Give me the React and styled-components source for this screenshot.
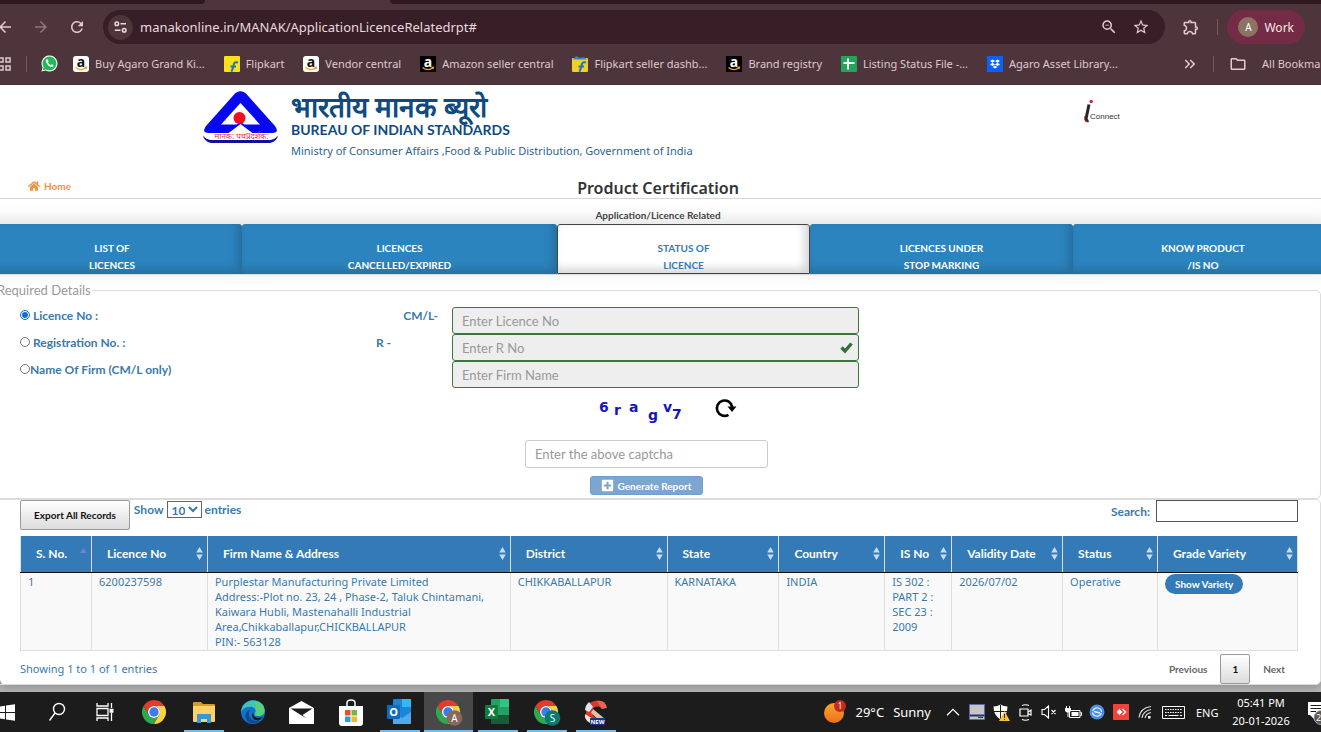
import React, { useState } from "react"
import styled, { createGlobalStyle } from "styled-components"
import {
  MdArrowBack,
  MdArrowForward,
  MdKeyboardDoubleArrowRight,
  MdOutlineExtension,
  MdOutlineFolder,
  MdRefresh,
  MdStarBorder,
  MdZoomOut,
} from "react-icons/md"
import { FaHome, FaPlusSquare } from "react-icons/fa"

const GlobalStyle = createGlobalStyle`
  * {
    box-sizing: border-box;
  }
  body {
    margin: 0;
    font-family: "Noto Sans", "Open Sans", sans-serif;
    font-size: 11px;
    overflow-x: hidden;
  }
  button, input, select {
    font-family: inherit;
  }
  svg {
    overflow: visible;
  }
`

const Shell = styled.div`
  min-height: 100vh;
  display: flex;
  flex-direction: column;
  overflow: hidden;
  background: #bdbdbd;
`

/* ---------- browser ---------- */

const Browser = styled.header`
  position: relative;
  background: #4e353c;
  color: #e6d0d6;
  height: 85px;
`

const TabStrip = styled.div`
  display: flex;
  justify-content: space-between;
  height: 4px;
`

const InactiveTabs = styled.div`
  width: ${props => props.width};
  background: #2f1820;
  border-radius: ${props => (props.right ? "0 0 0 6px" : "0 0 6px 0")};
`

const Toolbar = styled.div`
  display: flex;
  align-items: center;
  height: 46px;
  padding-right: 16px;
`

const NavButton = styled.button`
  display: flex;
  align-items: center;
  justify-content: center;
  width: ${props => props.width || 36}px;
  height: 28px;
  margin-left: ${props => (props.bleed ? -14 : 0)}px;
  padding: 0;
  border: 0;
  background: none;
  color: ${props => (props.faded ? "#8f757d" : "#e6c9d1")};
  font-size: 18px;
  flex: none;
`

const Omnibox = styled.div`
  flex: 1;
  display: flex;
  align-items: center;
  height: 34px;
  margin-left: 8px;
  padding: 0 8px 0 5px;
  border-radius: 17px;
  background: #371e27;
`

const SiteInfo = styled.button`
  display: flex;
  align-items: center;
  justify-content: center;
  width: 25px;
  height: 25px;
  padding: 0;
  border: 0;
  border-radius: 50%;
  background: #4e353c;
`

const Address = styled.input`
  flex: 1;
  min-width: 0;
  margin-left: 7px;
  padding: 0;
  border: 0;
  outline: 0;
  background: none;
  color: #ead9dd;
  font-size: 13px;
`

const Divider = styled.span`
  width: 1px;
  height: 16px;
  flex: none;
  background: #755962;
`

const Profile = styled.button`
  display: flex;
  align-items: center;
  gap: 6px;
  height: 34px;
  margin-left: 9px;
  padding: 0 11px;
  border: 0;
  border-radius: 17px;
  background: #742b46;
  color: #fbe4eb;
  font-size: 12px;
`

const Avatar = styled.span`
  width: 20px;
  height: 20px;
  border-radius: 50%;
  background: #8c7463;
  color: #fff;
  font-size: 10px;
  line-height: 20px;
  text-align: center;
`

const Bookmarks = styled.nav`
  display: flex;
  align-items: center;
  height: 27px;
  white-space: nowrap;
`

const BookmarkLinks = styled.div`
  flex: 1;
  display: flex;
  align-items: center;
  gap: 19px;
  margin-left: 14px;
`

const Bookmark = styled.a`
  display: flex;
  align-items: center;
  gap: 6px;
  margin-right: ${props => (props.tight ? -4 : 0)}px;
  color: #dfc9cf;
  font-size: 11px;
  text-decoration: none;
  svg {
    flex: none;
  }
`

/* ---------- page ---------- */

const Page = styled.main`
  background: #fff;
  border-radius: 0 0 6px 6px;
  box-shadow: 0 0 12px 4px #8f8f8f;
`

const Banner = styled.div`
  display: flex;
  justify-content: space-between;
  align-items: flex-start;
  height: 93px;
  padding: 6px 201px 0 203px;
`

const Brand = styled.div`
  display: flex;
  gap: 13px;
`

const BrandHindi = styled.div`
  color: #0f4a80;
  font-family: Lato, sans-serif;
  font-size: 28px;
  font-weight: 700;
  line-height: 30px;
`

const BrandName = styled.div`
  color: #0f4a80;
  font-family: Lato, sans-serif;
  font-size: 14px;
  font-weight: 700;
  line-height: 18px;
`

const Ministry = styled.div`
  margin-top: 4px;
  color: #2a6496;
  line-height: 16px;
`

const Partner = styled.div`
  margin-top: 8px;
`

const TitleRow = styled.div`
  display: grid;
  grid-template-columns: 1fr auto 1fr;
  align-items: center;
  height: 21px;
  padding: 0 5px 0 0;
  border-bottom: 1px solid #d5d5d5;
`

const HomeLink = styled.a`
  display: flex;
  align-items: center;
  gap: 4px;
  padding: 0 0 4px 28px;
  color: #f0923a;
  font-family: Lato, sans-serif;
  font-size: 10px;
  font-weight: 700;
  text-decoration: none;
  svg {
    font-size: 12px;
  }
`

const Title = styled.h1`
  margin: 0;
  color: #333;
  font-size: 16px;
  font-weight: 600;
  line-height: 20px;
`

const Subtitle = styled.h2`
  height: 25px;
  margin: 0;
  padding: 8px 5px 0 0;
  color: #444;
  font-family: Lato, sans-serif;
  font-size: 10px;
  font-weight: 700;
  line-height: 16px;
  text-align: center;
`

const Tabs = styled.div`
  display: grid;
  grid-template-columns: 260fr 315fr 253fr 263fr 260fr;
  margin: 0 -12px 6px -18px;
  border-bottom: 1px solid #d5dde3;
  box-shadow: 0 -4px 16px rgba(0, 0, 0, 0.12);
`

const Tab = styled.button`
  height: 50px;
  padding: ${props => (props.active ? 15 : 16)}px 0 0;
  border: ${props => (props.active ? "1px solid #444" : "0")};
  border-radius: 3px 3px 0 0;
  background: ${props => (props.active ? "#fff" : "#2c84be")};
  box-shadow: inset -4px -4px 10px rgba(0, 0, 0, 0.18);
  color: ${props => (props.active ? "#337ab7" : "#fff")};
  font-family: Lato, sans-serif;
  font-size: 10px;
  font-weight: 700;
  line-height: 17px;
  white-space: pre-line;
`

const Panel = styled.fieldset`
  min-width: 0;
  margin: 0 0 0 -5px;
  padding: 0 0 0 4px;
  border: 1px solid #dcdcdc;
  border-radius: 5px;
`

const Legend = styled.legend`
  margin: 0 0 8px -4px;
  padding: 0 1px;
  color: #999;
  font-family: Lato, sans-serif;
  font-size: 13px;
  line-height: 18px;
`

const FormRow = styled.div`
  display: grid;
  grid-template-columns: 452fr 407fr 461fr;
`

const FormLabels = styled.div`
  display: flex;
  justify-content: space-between;
  align-items: flex-start;
  padding-left: 20px;
  color: #3a79ad;
  font-family: Lato, sans-serif;
  font-size: 12px;
  font-weight: 700;
  line-height: 18px;
`

const Radio = styled.input`
  width: 10px;
  height: 10px;
  margin: 3px ${props => (props.tight ? 0 : 3)}px 0 0;
  accent-color: #0b6fd6;
`

const RadioLabel = styled.label`
  flex: 1;
`

const Prefix = styled.label`
  padding-right: ${props => props.space}px;
`

const FieldBox = styled.div`
  position: relative;
`

const TextField = styled.input`
  width: 100%;
  height: 27px;
  padding: 0 9px;
  border: 1px solid #3c763d;
  border-radius: 3px;
  background: #eee;
  font-family: Lato, sans-serif;
  font-size: 13px;
  &::placeholder {
    color: #999;
  }
`

const ValidMark = styled.svg`
  position: absolute;
  top: 8px;
  right: 6px;
`

const Captcha = styled.div`
  display: flex;
  flex-direction: column;
  align-items: center;
  padding: 8px 27px 3px 0;
`

const CaptchaImage = styled.div`
  display: flex;
  align-items: flex-start;
  gap: 29px;
  height: 44px;
  padding-left: 42px;
`

const RefreshButton = styled.button`
  padding: 2px 0 0;
  border: 0;
  background: none;
`

const CaptchaField = styled(TextField)`
  width: 243px;
  height: 28px;
  border-color: #ccc;
  background: #fff;
`

const GenerateButton = styled.button`
  display: flex;
  align-items: center;
  gap: 4px;
  height: 19px;
  margin-top: 8px;
  padding: 0 11px 0 10px;
  border: 1px solid #6f9fcc;
  border-radius: 3px;
  background: #7ca6cf;
  color: #fff;
  font-family: Lato, sans-serif;
  font-size: 10px;
  font-weight: 700;
  svg {
    font-size: 13px;
  }
`

/* ---------- records ---------- */

const Records = styled.div`
  padding: 0 22px 0 20px;
  color: #3a79ad;
`

const RecordTools = styled.div`
  display: flex;
  align-items: flex-start;
  height: 36px;
  font-family: Lato, sans-serif;
  font-size: 12px;
  font-weight: 700;
`

const GreyButton = styled.button`
  height: 30px;
  padding: 0 ${props => props.pad}px;
  border: 1px solid #999;
  border-radius: 2px;
  background: linear-gradient(#fff, #dcdcdc);
  color: #111;
  font-family: Lato, sans-serif;
  font-size: 10px;
  font-weight: 700;
`

const Length = styled.label`
  display: flex;
  align-items: center;
  gap: 3px;
  height: 19px;
  margin-left: 4px;
`

const LengthSelect = styled.select`
  width: 35px;
  height: 17px;
  padding: 0;
  border: 1px solid #666;
  background: #fff;
  color: inherit;
  font-size: 12px;
  font-weight: 700;
`

const Search = styled.label`
  display: flex;
  align-items: center;
  gap: 6px;
  margin-left: auto;
`

const SearchField = styled.input`
  width: 142px;
  height: 22px;
  border: 1px solid #555;
  background: #fff;
`

const Table = styled.table`
  width: 100%;
  border-collapse: collapse;
  table-layout: fixed;
`

const Head = styled.th`
  width: ${props => props.width}%;
  height: 36px;
  padding: 0 3px 0 15px;
  border: 1px solid #ddd;
  border-width: 0 1px;
  border-bottom: 1px solid #111;
  background: #337ab7;
  color: #fff;
  font-family: Lato, sans-serif;
  font-size: 12px;
  font-weight: 700;
  text-align: left;
`

const HeadInner = styled.div`
  display: flex;
  justify-content: space-between;
  align-items: center;
  white-space: nowrap;
`

const Data = styled.td`
  height: 78px;
  padding: 1px 7px;
  border: 1px solid #ddd;
  background: #f9f9f9;
  line-height: 15px;
  vertical-align: top;
  white-space: pre-line;
`

const VarietyButton = styled.button`
  height: 20px;
  padding: 0 10px;
  border: 0;
  border-radius: 10px;
  background: #337ab7;
  color: #fff;
  font-family: Lato, sans-serif;
  font-size: 10px;
  font-weight: 700;
`

const RecordFooter = styled.div`
  display: flex;
  justify-content: space-between;
  align-items: center;
  padding-top: 3px;
`

const PageLink = styled.button`
  padding: 0 13px;
  border: 0;
  background: none;
  color: #666;
  font-family: Lato, sans-serif;
  font-size: 10px;
  font-weight: 700;
`

/* ---------- taskbar ---------- */

const Taskbar = styled.footer`
  display: flex;
  align-items: stretch;
  height: 40px;
  margin-top: auto;
  background: #1c1c1c;
  color: #fff;
  position: relative;
`

const TaskButton = styled.button`
  display: flex;
  align-items: center;
  justify-content: ${props => (props.start ? "flex-start" : "center")};
  width: ${props => (props.start ? 32 : 49)}px;
  padding: 0;
  border: 0;
  background: ${props =>
    props.open
      ? `linear-gradient(#76b9ed, #76b9ed) center bottom / ${props.active ? 49 : 40}px 2px no-repeat, `
      : ""}${props => (props.active ? "#484848" : "transparent")};
`

const Tray = styled.div`
  display: flex;
  align-items: center;
  margin-left: auto;
`

const Weather = styled.div`
  display: flex;
  align-items: center;
  gap: 9px;
  padding-right: 10px;
  font-size: 13px;
`

const TrayIcon = styled.span`
  display: flex;
  justify-content: center;
  width: ${props => props.width || 24}px;
`

const Language = styled.span`
  width: 37px;
  padding-left: 7px;
`

const Clock = styled.div`
  width: 70px;
  line-height: 18px;
  text-align: center;
`

const Notices = styled.span`
  display: flex;
  width: 25px;
  padding-left: 12px;
`

const AmazonIcon = ({ dark }) => (
  <svg width="16" height="16" viewBox="0 0 16 16">
    <rect width="16" height="16" rx={dark ? 0 : 3} fill={dark ? "#000" : "#fff"} />
    <text x="8" y="10.5" textAnchor="middle" fontFamily="Noto Sans" fontSize="14" fontWeight="700" fill={dark ? "#fff" : "#111"}>a</text>
    <path d="M2.5 11.5c3.4 2.7 7.4 2.7 10.6.3M11.3 11.3l2.200-.1-.5 2" fill="none" stroke="#f5a02c" strokeWidth="1.2" />
  </svg>
)

const FlipkartIcon = ({ bag }) => (
  <svg width="16" height="16" viewBox="0 0 16 16">
    <rect y={bag ? 2 : 0} width="16" height={bag ? 14 : 16} rx="1" fill={bag ? "#f3cf2b" : "#f9e21c"} />
    {bag && <path d="M1 3.5 4 0l4 2 4-1 3 2.5z" fill="#2d87c8" />}
    <path d="M14 6.500c-3-1-4 .5-4.400 2.700-.5 2.800-1 4.500-2.200 6.600M6.500 10.500h5.500" fill="none" stroke="#2277b8" strokeWidth="2" />
  </svg>
)

const SheetIcon = () => (
  <svg width="16" height="16" viewBox="0 0 16 16">
    <rect width="16" height="16" rx="1" fill="#23a45a" />
    <path d="M2.500 7h11M7 2.500v11" stroke="#fff" strokeWidth="2" />
  </svg>
)

const WhatsappIcon = () => (
  <svg width="17" height="17" viewBox="0 0 17 17">
    <path d="M.5 16.500 1.600 12.500A8 8 0 1 1 4.700 15.500z" fill="#fff" />
    <path d="M1.800 15.200l.9-3A6.900 6.900 0 1 1 5 14.400z" fill="#20b858" />
    <path d="M5.500 4.500c-1 1-.8 2.600.8 4.700 1.700 2.100 3.700 3.300 5.300 2.500.9-.5 1-1.300.8-1.600l-1.700-.9-.9 1c-1.300-.5-2.300-1.500-2.900-2.700l.7-.9-.8-1.900c-.3-.5-.9-.6-1.300-.2z" fill="#fff" />
  </svg>
)

const DropboxIcon = () => (
  <svg width="16" height="16" viewBox="0 0 16 16">
    <rect width="16" height="16" fill="#0d5fff" />
    <path d="m5.500 3.500 2.500 1.600-2.500 1.600L3 5.100zm5 0L13 5.100l-2.500 1.600L8 5.100zm-5 3.300L8 8.400 5.500 10 3 8.400zm5 0L13 8.400 10.500 10 8 8.400zM8 9.500l2.400 1.500L8 12.500 5.600 11z" fill="#fff" />
  </svg>
)

const AppsIcon = () => (
  <svg width="10" height="14" viewBox="0 0 10 14" fill="none" stroke="#dfc9cf" strokeWidth="1.500">
    <path d="M-2 1h4v4h-4zM5 1h4v4H5zM-2 9h4v4h-4zM5 9h4v4H5z" />
  </svg>
)

const TuneIcon = () => (
  <svg width="13" height="12" viewBox="0 0 13 12" fill="none" stroke="#ead9dd" strokeWidth="1.500">
    <circle cx="2.800" cy="2.800" r="1.800" />
    <path d="M6.500 2.800H12M.8 9.200h5.700" />
    <circle cx="10.200" cy="9.200" r="1.800" />
  </svg>
)

const BisLogo = () => (
  <svg width="75" height="52" viewBox="0 0 75 52">
    <path d="M32 2.500q5.500-4.500 11 0L72 35q5 7-3 7H49L37.500 34 26 42H6q-8 0-3-7z" fill="#0808f0" />
    <path d="M37.500 12 57 33.500H41.500L37.500 31l-4 2.500H18z" fill="#fff" />
    <path d="M37.500 33 50 42.500H25z" fill="#fff" />
    <circle cx="36.500" cy="27" r="6" fill="#f50d1c" />
    <path d="M0 44.500q3 4 8 4.500h59q5-.5 8-4.500-1 6-8 7.500H8q-7-1.500-8-7.500z" fill="#10109c" />
    <text x="38.500" y="48" textAnchor="middle" fontFamily="Noto Sans" fontSize="8" fill="#e5334a">मानक: पथप्रदर्शक:</text>
  </svg>
)

const ConnectLogo = () => (
  <svg width="37" height="26" viewBox="0 0 37 26">
    <path d="M6 5.500 3.200 19q-.6 3.500 2.300 2.500" fill="none" stroke="#2b2525" strokeWidth="3" />
    <path d="M1.800 17q-1.200 6 2.800 5.500" fill="none" stroke="#c03a3a" strokeWidth="1" />
    <circle cx="8.200" cy="2.500" r="1.700" fill="#b5323a" />
    <text x="7" y="20" fontFamily="Liberation Sans" fontSize="8" fill="#333">Connect</text>
  </svg>
)

const ReloadIcon = () => (
  <svg width="22" height="20" viewBox="0 0 22 20">
    <path d="M13.500 16.800A7.700 7.700 0 1 1 17.200 9" fill="none" stroke="#000" strokeWidth="2.600" />
    <path d="M12.500 8.500H21.500L17 14z" fill="#000" />
  </svg>
)

const CaptchaText = () => (
  <svg width="88" height="30" viewBox="0 0 88 30" fontFamily="DejaVu Sans" fontSize="14" fontWeight="700" fill="#1414c0">
    <text x="1" y="16">6</text>
    <text x="16" y="19">r</text>
    <text x="31" y="16">a</text>
    <text x="50" y="24">g</text>
    <text x="65" y="16">v</text>
    <text x="74" y="23">7</text>
  </svg>
)

const SortIcon = ({ sorted }) => (
  <svg width="9" height="13" viewBox="0 0 9 13">
    {sorted ? (
      <path d="M4.500 1 8 6H1z" fill="#6e7fdc" />
    ) : (
      <path d="M4.500 0 7.800 5.500H1.200zM4.500 13 1.200 7.500h6.600z" fill="#c8dcef" />
    )}
  </svg>
)

const WindowsIcon = () => (
  <svg width="16" height="17" viewBox="0 0 16 17">
    <path d="M0 2.400 5 1.700V8H0zM6 1.500 15 .2V8H6zM0 9h5v6.300L0 14.600zM6 9h9v7.800l-9-1.300z" fill="#fff" />
  </svg>
)

const SearchIcon = () => (
  <svg width="18" height="20" viewBox="0 0 18 20" fill="none" stroke="#fff" strokeWidth="1.400">
    <circle cx="11" cy="7" r="5.500" />
    <path d="M7 11 1.500 18.500" />
  </svg>
)

const TaskViewIcon = () => (
  <svg width="18" height="18" viewBox="0 0 18 18" fill="none" stroke="#fff" strokeWidth="1.300">
    <path d="M0 0v3h11V0M0 18v-3h11v3M0 5.500h11v7H0zM14.500 0v5M14.500 10v8" />
    <path d="M13.200 6.500h2.600v2.600h-2.600z" fill="#fff" />
  </svg>
)

const ChromeIcon = ({ badge, badgeColor }) => (
  <svg width="26" height="28" viewBox="0 0 26 28">
    <path d="M1.600 8A12 12 0 0 1 22.400 8H12a6 6 0 0 0-5.200 9z" fill="#e33b2e" />
    <path d="M1.600 8 6.800 17a6 6 0 0 0 10.400 0L12 26A12 12 0 0 1 1.600 8z" fill="#2da94f" />
    <path d="M22.400 8A12 12 0 0 1 12 26l5.200-9A6 6 0 0 0 12 8z" fill="#fdd23e" />
    <circle cx="12" cy="14" r="6" fill="#fff" />
    <circle cx="12" cy="14" r="4.700" fill="#3a7cec" />
    {badge && <circle cx="18.500" cy="20" r="7.800" fill={badgeColor} />}
    {badge && (
      <text x="18.500" y="23.500" textAnchor="middle" fontFamily="Noto Sans" fontSize="10" fill="#fff">{badge}</text>
    )}
  </svg>
)

const ExplorerIcon = () => (
  <svg width="22" height="22" viewBox="0 0 22 22">
    <path d="M0 2q0-1 1-1h7l2 2h11q1 0 1 1v5H0z" fill="#d99a28" />
    <path d="M0 5h22v15q0 1-1 1H1q-1 0-1-1z" fill="#fbd268" />
    <path d="M4 13h14v9h-4v-4H8v4H4z" fill="#3d94d6" />
  </svg>
)

const EdgeIcon = () => (
  <svg width="24" height="26" viewBox="0 0 24 26">
    <circle cx="12" cy="13" r="12" fill="#1473c8" />
    <path d="M1 9C4 0 17-1 22 6c3.500 6 0 11-5 11-4 0-4-2-3-3 2-4-2-7-6-6C4 8 1 10 0 14q0-3 1-5z" fill="#3fc5b8" />
    <path d="M14 2c6 1 10 6 9.700 11-.5 3-4 4.500-7.700 3.800" fill="#62d663" opacity=".7" />
    <path d="M9 11c-3 5 0 12 10 11-5 4-12 3-14-2-2-4 0-8 4-9z" fill="#0d4a96" />
    <path d="M12.500 14c-.5 5 5 6 10 3.500-2 1.500-3 4-6 4-5 0-7.500-6-4-7.500z" fill="#1c1c1c" />
  </svg>
)

const MailIcon = () => (
  <svg width="25" height="23" viewBox="0 0 25 23">
    <path d="M0 7 12.500 0 25 7v16H0z" fill="#fff" />
    <path d="M1.500 7.500h22L13.500 14l4 3.500z" fill="#1c1c1c" />
  </svg>
)

const StoreIcon = () => (
  <svg width="24" height="27" viewBox="0 0 24 27">
    <path d="M8 8V4q0-3 4-3t4 3v4" fill="none" stroke="#fff" strokeWidth="1.500" />
    <path d="M0 7h24v17q0 3-3 3H3q-3 0-3-3z" fill="#fff" />
    <path d="M6 11h5.500v5.500H6z" fill="#e8502c" />
    <path d="M12.500 11H18v5.500h-5.500z" fill="#7cb82f" />
    <path d="M6 17.500h5.500V23H6z" fill="#2c9fe0" />
    <path d="M12.500 17.500H18V23h-5.500z" fill="#f7b924" />
  </svg>
)

const OfficeIcon = ({ excel }) => (
  <svg width="25" height="26" viewBox="0 0 25 26">
    <rect x="6" y="0" width="18" height="25" rx="1" fill={excel ? "#21a366" : "#1b85d8"} />
    <path d="M15 0h8q1 0 1 1v7h-9z" fill={excel ? "#33c481" : "#35b8f1"} />
    <path d={excel ? "M6 16h18v8q0 1-1 1H6z" : "M6 13l9 6 9-6v11q0 1-1 1H6z"} fill={excel ? "#185c37" : "#50a9ea"} />
    <rect x="0" y="6" width="13" height="14" rx="1" fill={excel ? "#107c41" : "#0f6cbd"} />
    <text x="6.500" y="17" textAnchor="middle" fontFamily="Noto Sans" fontSize="11" fontWeight="700" fill="#fff">{excel ? "X" : "O"}</text>
  </svg>
)

const CleanerIcon = () => (
  <svg width="24" height="27" viewBox="0 0 24 27">
    <path d="M20 8C16 2 5 4 5 13c0 6 5 10 10 9" fill="none" stroke="#d8392c" strokeWidth="6" />
    <path d="M13 2q8-2 10 7l-5 1z" fill="#e9654c" />
    <path d="M5 3q-4 4-4 8l4 2 4-5z" fill="#dfe5ee" />
    <path d="M9 10 21 20l-4 3L7 14z" fill="#e9c29c" />
    <path d="M1 15q-1 6 5 9l3-4z" fill="#f1e3d2" />
    <rect x="6" y="19" width="15" height="7" rx="1" fill="#17328c" />
    <text x="13.500" y="25" textAnchor="middle" fontFamily="Noto Sans" fontSize="6" fontWeight="700" fill="#fff">NEW</text>
  </svg>
)

const SunIcon = () => (
  <svg width="22" height="24" viewBox="0 0 22 24">
    <defs>
      <linearGradient id="sun" x1="0" y1="0" x2="0" y2="1">
        <stop offset="0" stopColor="#f9a62b" />
        <stop offset="1" stopColor="#ee6f1c" />
      </linearGradient>
    </defs>
    <circle cx="10" cy="13" r="10" fill="url(#sun)" />
    <circle cx="16" cy="6" r="6" fill="#c42b1c" />
    <text x="16" y="9" textAnchor="middle" fontFamily="Noto Sans" fontSize="8" fill="#fff">1</text>
  </svg>
)

const ChevronIcon = () => (
  <svg width="14" height="8" viewBox="0 0 14 8" fill="none" stroke="#fff" strokeWidth="1.300">
    <path d="M1 7.300 7 1.300l6 6" />
  </svg>
)

const MonitorIcon = () => (
  <svg width="16" height="16" viewBox="0 0 16 16">
    <path d="M.5.500h15v15H.5z" fill="#c6c6c6" stroke="#5a68b0" />
    <path d="M1 11h14v1H1zM9 13.500h5" stroke="#26336d" fill="#26336d" />
  </svg>
)

const ShieldIcon = () => (
  <svg width="17" height="17" viewBox="0 0 17 17">
    <path d="M7.500.500q3 2 7 2 0 9-7 13-7-4-7-13 4 0 7-2z" fill="#fff" />
    <path d="M7.500 1v14M1 7.500h13" stroke="#1c1c1c" strokeWidth="1" />
    <path d="M11.500 7 17 17H6z" fill="#fbc22b" />
    <path d="M11.500 10v4M11.500 15v1" stroke="#222" strokeWidth="1" />
  </svg>
)

const CameraIcon = () => (
  <svg width="13" height="17" viewBox="0 0 13 17" fill="none" stroke="#fff" strokeWidth="1.200">
    <path d="M3 1.500q3.500-1.500 7 0M3 15.500q3.500 1.500 7 0M1 5h8v7H1zM9 8l3-2v5L9 9.500" />
  </svg>
)

const MutedIcon = () => (
  <svg width="16" height="14" viewBox="0 0 16 14" fill="none" stroke="#fff" strokeWidth="1.100">
    <path d="M1 4.500h2.500l4-3.500v12l-4-3.500H1zM10.500 5l4 4M14.500 5l-4 4" />
  </svg>
)

const BatteryIcon = () => (
  <svg width="17" height="13" viewBox="0 0 17 13">
    <path d="M4.500 4.500h10.500v7H4.500zM15.500 6.500h1v3h-1" fill="none" stroke="#fff" />
    <path d="M6.500 6h7v4h-7zM0 2h6v3q-3 3-6 0zM1 0h1v2H1zM4 0h1v2H4zM2.500 6h1v5h-1z" fill="#fff" />
  </svg>
)

const SyncIcon = () => (
  <svg width="16" height="16" viewBox="0 0 16 16">
    <circle cx="8" cy="8" r="7.500" fill="#4a8fe0" />
    <path d="M3.500 7q2-4 5.500-3t3.500 4M12.500 9q-2 4-5.500 3T3.500 8.500M5 7.500l6 1.500" fill="none" stroke="#dcebfb" strokeWidth="1.300" />
  </svg>
)

const AnyDeskIcon = () => (
  <svg width="16" height="16" viewBox="0 0 16 16">
    <rect width="16" height="16" fill="#ef443b" />
    <path d="m6.500 5 3 3-3 3-3-3z" fill="#fff" />
    <path d="m9.500 5 3 3-3 3" fill="none" stroke="#fff" strokeWidth="1.300" />
  </svg>
)

const WifiIcon = () => (
  <svg width="14" height="14" viewBox="0 0 14 14" fill="none" stroke="#d8d8d8" strokeWidth="1.200">
    <path d="M1 12.500Q2 3 13 1.500M4 13Q5 6 13 4.500M7 13Q8 8.500 13 7.500" />
    <path d="M10 11h2.500v2.500H10z" fill="#fff" stroke="none" />
  </svg>
)

const KeyboardIcon = () => (
  <svg width="23" height="13" viewBox="0 0 23 13" fill="none" stroke="#fff">
    <path d="M.5.500h22v12H.5z" />
    <path d="M3 3.500h17M3 6.500h17" strokeDasharray="1.500 1" />
    <path d="M3 9.500h2M6.500 9.500h10M18 9.500h2" />
  </svg>
)

const NoticeIcon = () => (
  <svg width="13" height="26" viewBox="0 0 13 26">
    <path d="M0 3h13v13H6v4l-4-4H0z" fill="#fff" />
    <path d="M2.500 6.500H13M2.500 9.500H13M2.500 12.500H8" stroke="#1c1c1c" />
    <circle cx="13" cy="18.500" r="7" fill="#5a5a5a" stroke="#bbb" strokeWidth=".8" />
    <text x="8" y="22" fontFamily="Noto Sans" fontSize="9" fill="#fff">2</text>
  </svg>
)

const bookmarks = [
  { label: "Buy Agaro Grand Ki...", icon: <AmazonIcon /> },
  { label: "Flipkart", icon: <FlipkartIcon /> },
  { label: "Vendor central", icon: <AmazonIcon /> },
  { label: "Amazon seller central", icon: <AmazonIcon dark /> },
  { label: "Flipkart seller dashb...", icon: <FlipkartIcon bag /> },
  { label: "Brand registry", icon: <AmazonIcon dark /> },
  { label: "Listing Status File -...", icon: <SheetIcon /> },
  { label: "Agaro Asset Library...", icon: <DropboxIcon /> },
]

const tabs = [
  "LIST OF\nLICENCES",
  "LICENCES\nCANCELLED/EXPIRED",
  "STATUS OF\nLICENCE",
  "LICENCES UNDER\nSTOP MARKING",
  "KNOW PRODUCT\n/IS NO",
]

const fields = [
  { id: "licence", label: "Licence No :", prefix: "CM/L-", space: 14, hint: "Enter Licence No" },
  { id: "registration", label: "Registration No. :", prefix: "R -", space: 61, hint: "Enter R No", valid: true },
  { id: "firm", label: "Name Of Firm (CM/L only)", hint: "Enter Firm Name", tight: true },
]

const columns = [
  { label: "S. No.", width: 5.56, value: "1" },
  { label: "Licence No", width: 9.08, value: "6200237598" },
  {
    label: "Firm Name & Address",
    width: 23.71,
    value:
      "Purplestar Manufacturing Private Limited\nAddress:-Plot no. 23, 24 , Phase-2, Taluk Chintamani, Kaiwara Hubli, Mastenahalli Industrial Area,Chikkaballapur,CHICKBALLAPUR\nPIN:- 563128",
  },
  { label: "District", width: 12.28, value: "CHIKKABALLAPUR" },
  { label: "State", width: 8.76, value: "KARNATAKA" },
  { label: "Country", width: 8.29, value: "INDIA" },
  { label: "IS No", width: 5.24, value: "IS 302 :\nPART 2 :\nSEC 23 :\n2009" },
  { label: "Validity Date", width: 8.69, value: "2026/07/02" },
  { label: "Status", width: 7.43, value: "Operative" },
  { label: "Grade Variety", width: 10.96, value: <VarietyButton>Show Variety</VarietyButton> },
]

const tasks = [
  { name: "Start", icon: <WindowsIcon />, start: true },
  { name: "Search", icon: <SearchIcon /> },
  { name: "Task View", icon: <TaskViewIcon /> },
  { name: "Chrome", icon: <ChromeIcon /> },
  { name: "File Explorer", icon: <ExplorerIcon />, open: true },
  { name: "Edge", icon: <EdgeIcon /> },
  { name: "Mail", icon: <MailIcon /> },
  { name: "Store", icon: <StoreIcon /> },
  { name: "Outlook", icon: <OfficeIcon />, open: true },
  { name: "Chrome A", icon: <ChromeIcon badge="A" badgeColor="#86695b" />, open: true, active: true },
  { name: "Excel", icon: <OfficeIcon excel />, open: true },
  { name: "Chrome S", icon: <ChromeIcon badge="S" badgeColor="#0b7a6c" />, open: true },
  { name: "Cleaner", icon: <CleanerIcon />, open: true },
]

const trayIcons = [
  ChevronIcon,
  MonitorIcon,
  ShieldIcon,
  CameraIcon,
  MutedIcon,
  BatteryIcon,
  SyncIcon,
  AnyDeskIcon,
  WifiIcon,
]

const BrowserBar = () => (
  <Browser>
    <TabStrip>
      <InactiveTabs width="205px" />
      <InactiveTabs right width="calc(100% - 390px)" />
    </TabStrip>
    <Toolbar>
      <NavButton bleed={1} width={37} aria-label="Back"><MdArrowBack /></NavButton>
      <NavButton faded={1} aria-label="Forward"><MdArrowForward /></NavButton>
      <NavButton aria-label="Reload"><MdRefresh /></NavButton>
      <Omnibox>
        <SiteInfo aria-label="Site information"><TuneIcon /></SiteInfo>
        <Address aria-label="Address" defaultValue="manakonline.in/MANAK/ApplicationLicenceRelatedrpt#" />
        <NavButton width={32} aria-label="Zoom"><MdZoomOut /></NavButton>
        <NavButton width={32} aria-label="Bookmark this page"><MdStarBorder /></NavButton>
      </Omnibox>
      <NavButton width={52} aria-label="Extensions"><MdOutlineExtension /></NavButton>
      <Divider />
      <Profile>
        <Avatar>A</Avatar>
        Work
      </Profile>
    </Toolbar>
    <Bookmarks>
      <NavButton bleed={1} width={40} aria-label="Apps"><AppsIcon /></NavButton>
      <Divider />
      <BookmarkLinks>
        <Bookmark href="#" tight={1} aria-label="WhatsApp"><WhatsappIcon /></Bookmark>
        {bookmarks.map(({ label, icon }) => (
          <Bookmark href="#" key={label}>
            {icon}
            {label}
          </Bookmark>
        ))}
      </BookmarkLinks>
      <NavButton width={46} aria-label="More bookmarks"><MdKeyboardDoubleArrowRight /></NavButton>
      <Divider />
      <NavButton width={48} aria-label="Bookmarks folder"><MdOutlineFolder /></NavButton>
      <Bookmark href="#" tight={1}>All Bookmar</Bookmark>
    </Bookmarks>
  </Browser>
)

const App = () => {
  const [mode, setMode] = useState("licence")
  return (
    <Shell>
      <GlobalStyle />
      <BrowserBar />
      <Page>
        <Banner>
          <Brand>
            <BisLogo />
            <div>
              <BrandHindi>भारतीय मानक ब्यूरो</BrandHindi>
              <BrandName>BUREAU OF INDIAN STANDARDS</BrandName>
              <Ministry>Ministry of Consumer Affairs ,Food &amp; Public Distribution, Government of India</Ministry>
            </div>
          </Brand>
          <Partner><ConnectLogo /></Partner>
        </Banner>
        <TitleRow>
          <HomeLink href="#"><FaHome />Home</HomeLink>
          <Title>Product Certification</Title>
        </TitleRow>
        <Subtitle>Application/Licence Related</Subtitle>
        <Tabs>
          {tabs.map((label, i) => (
            <Tab key={label} active={i === 2 ? 1 : 0}>{label}</Tab>
          ))}
        </Tabs>
        <Panel>
          <Legend>Required Details</Legend>
          {fields.map(f => (
            <FormRow key={f.id}>
              <FormLabels>
                <Radio
                  type="radio"
                  name="mode"
                  id={`${f.id}-mode`}
                  tight={f.tight ? 1 : 0}
                  checked={mode === f.id}
                  onChange={() => setMode(f.id)}
                />
                <RadioLabel htmlFor={`${f.id}-mode`}>{f.label}</RadioLabel>
                {f.prefix && <Prefix htmlFor={f.id} space={f.space}>{f.prefix}</Prefix>}
              </FormLabels>
              <FieldBox>
                <TextField id={f.id} aria-label={f.label} placeholder={f.hint} />
                {f.valid && (
                  <ValidMark width="13" height="11" viewBox="0 0 13 11">
                    <path d="M1.500 5.500 5 9l6.500-7.500" fill="none" stroke="#35703a" strokeWidth="3.400" />
                  </ValidMark>
                )}
              </FieldBox>
            </FormRow>
          ))}
          <Captcha>
            <CaptchaImage>
              <CaptchaText />
              <RefreshButton aria-label="New captcha"><ReloadIcon /></RefreshButton>
            </CaptchaImage>
            <CaptchaField aria-label="Captcha" placeholder="Enter the above captcha" />
            <GenerateButton><FaPlusSquare />Generate Report</GenerateButton>
          </Captcha>
        </Panel>
        <Panel>
          <Records>
            <RecordTools>
              <GreyButton pad={13}>Export All Records</GreyButton>
              <Length>
                Show
                <LengthSelect defaultValue="10">
                  <option>10</option>
                  <option>25</option>
                  <option>50</option>
                </LengthSelect>
                entries
              </Length>
              <Search>
                Search:
                <SearchField type="search" />
              </Search>
            </RecordTools>
            <Table>
              <thead>
                <tr>
                  {columns.map((c, i) => (
                    <Head key={c.label} width={c.width}>
                      <HeadInner>
                        {c.label}
                        <SortIcon sorted={i === 0} />
                      </HeadInner>
                    </Head>
                  ))}
                </tr>
              </thead>
              <tbody>
                <tr>
                  {columns.map(c => (
                    <Data key={c.label}>{c.value}</Data>
                  ))}
                </tr>
              </tbody>
            </Table>
            <RecordFooter>
              <span>Showing 1 to 1 of 1 entries</span>
              <div>
                <PageLink>Previous</PageLink>
                <GreyButton pad={11}>1</GreyButton>
                <PageLink>Next</PageLink>
              </div>
            </RecordFooter>
          </Records>
        </Panel>
      </Page>
      <Taskbar>
        {tasks.map(({ name, icon, start, open, active }) => (
          <TaskButton key={name} aria-label={name} start={start ? 1 : 0} open={open ? 1 : 0} active={active ? 1 : 0}>
            {icon}
          </TaskButton>
        ))}
        <Tray>
          <Weather>
            <SunIcon />
            <span>29°C</span>
            <span>Sunny</span>
          </Weather>
          {trayIcons.map((Icon, i) => (
            <TrayIcon key={i}><Icon /></TrayIcon>
          ))}
          <TrayIcon width={32}><KeyboardIcon /></TrayIcon>
          <Language>ENG</Language>
          <Clock>
            05:41 PM
            <br />
            20-01-2026
          </Clock>
          <Notices><NoticeIcon /></Notices>
        </Tray>
      </Taskbar>
    </Shell>
  )
}

export default App
